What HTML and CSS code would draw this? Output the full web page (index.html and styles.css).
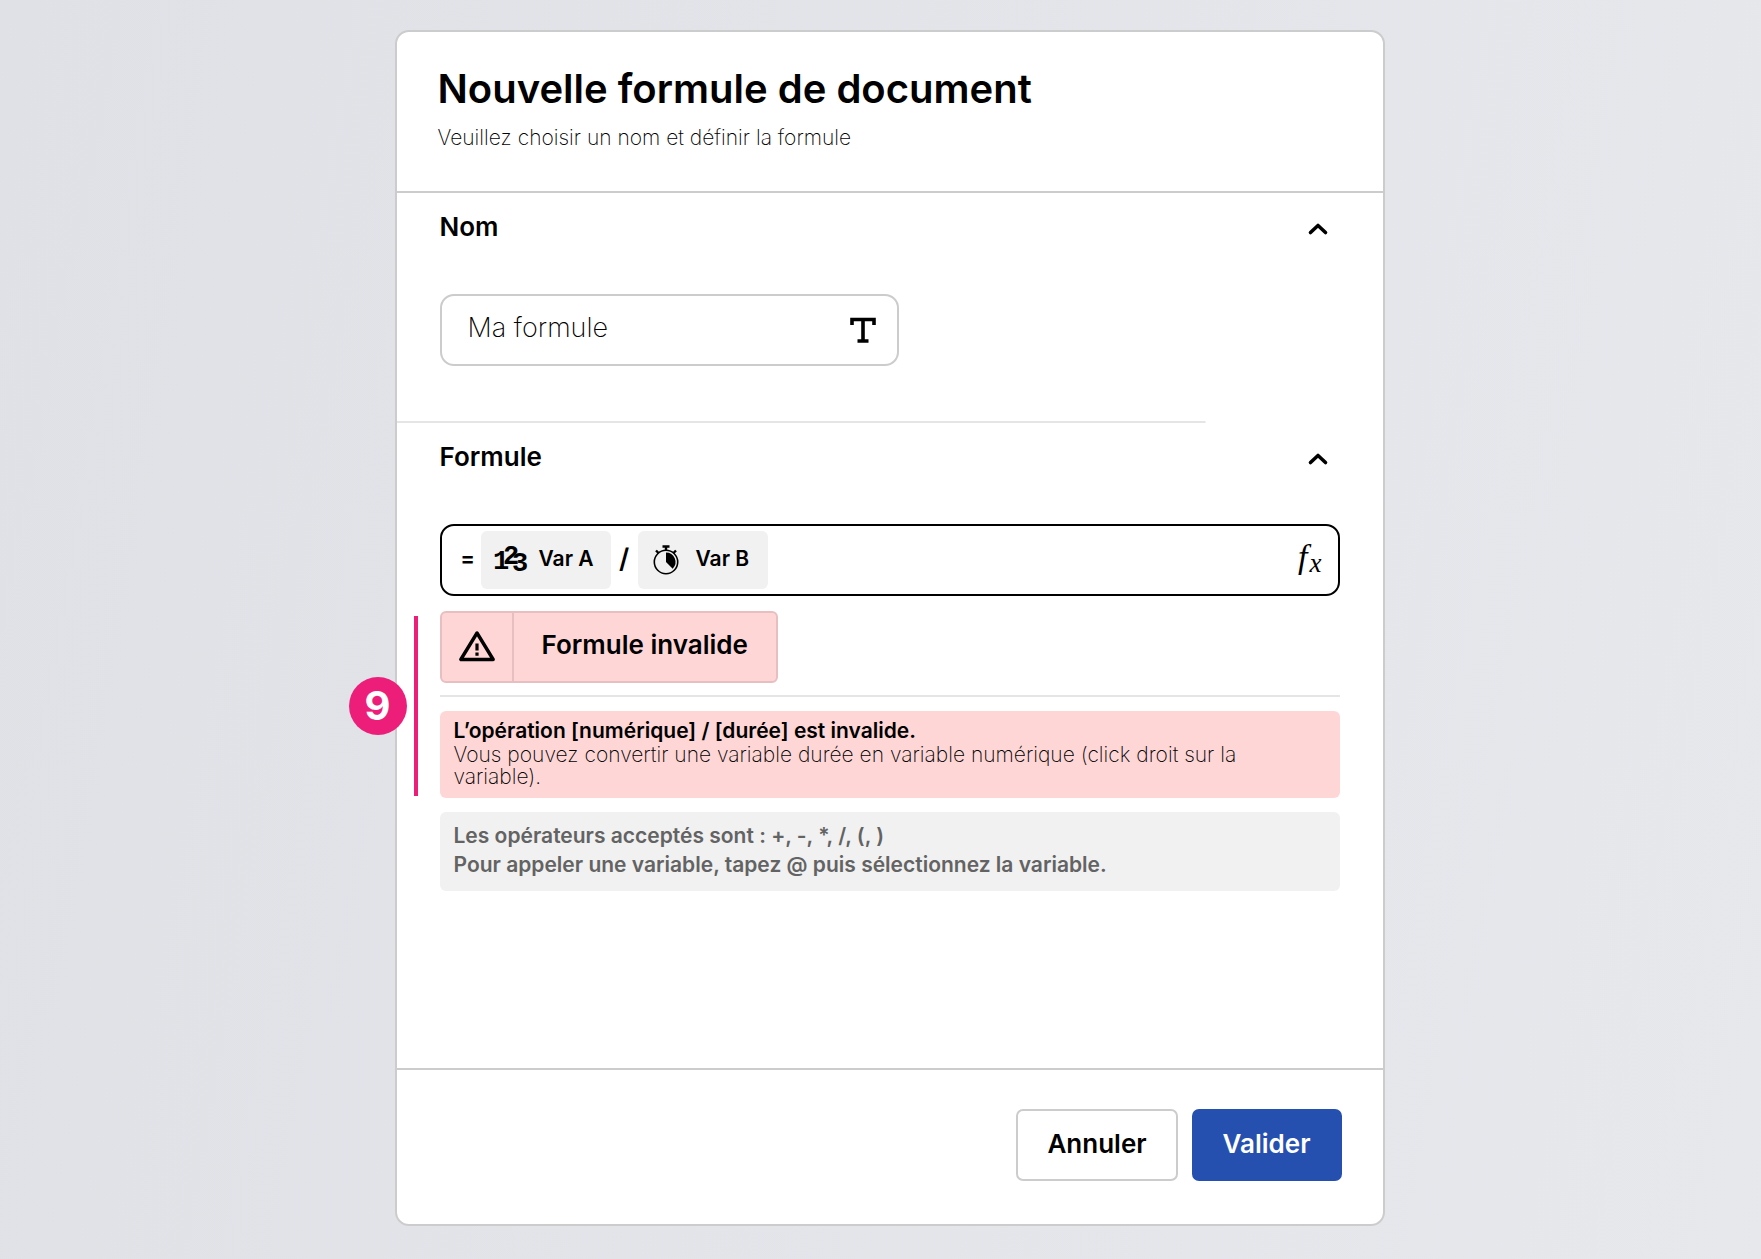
FILE: index.html
```html
<!DOCTYPE html>
<html lang="fr">
<head>
  <meta charset="UTF-8">
  <title>Nouvelle formule de document</title>
  <meta name="viewport" content="width=device-width, initial-scale=1.0">
  <link rel="stylesheet" href="styles.css">
</head>
<body>
  <main class="card">
    <header class="card-header">
      <h1>Nouvelle formule de document</h1>
      <p>Veuillez choisir un nom et définir la formule</p>
    </header>

    <form class="card-form">
      <section class="section section-name">
        <div class="section-head">
          <label class="section-title" for="name">Nom</label>
          <button type="button" class="toggle" aria-label="Replier Nom" aria-expanded="true">
            <svg width="20" height="14" viewBox="0 0 20 14"><path d="M2.500 10.500 10 3.500l7.500 7" fill="none" stroke="#000" stroke-width="3.600" stroke-linecap="round" stroke-linejoin="round"/></svg>
          </button>
        </div>
        <div class="field name-field">
          <input type="text" id="name" value="Ma formule">
          <svg width="26" height="26" viewBox="0 0 26 26"><path d="M2 8V2.500H24V8M13 2.500V24M7.500 24H18.500" fill="none" stroke="#000" stroke-width="3.600"/></svg>
        </div>
      </section>

      <section class="section section-formula">
        <div class="section-head">
          <label class="section-title" for="formula">Formule</label>
          <button type="button" class="toggle" aria-label="Replier Formule" aria-expanded="true">
            <svg width="20" height="14" viewBox="0 0 20 14"><path d="M2.500 10.500 10 3.500l7.500 7" fill="none" stroke="#000" stroke-width="3.600" stroke-linecap="round" stroke-linejoin="round"/></svg>
          </button>
        </div>
        <div class="field formula-field">
          <span class="equal">=</span>
          <button type="button" class="chip">
            <svg class="digits" width="32" height="34" viewBox="0 0 32 34">
              <text x="-2 8 17" y="26 21 28">123</text>
            </svg>
            <span>Var A</span>
          </button>
          <span class="slash">/</span>
          <button type="button" class="chip">
            <svg width="32" height="30" viewBox="0 0 32 30">
              <circle cx="14" cy="17" r="11.700" fill="none" stroke="#000" stroke-width="1.600"/>
              <path d="M14 7.500A9.500 9.500 0 0 1 20.700 23.700L14 17Z"/>
              <path d="M10.500 1.500h7M14 1.500V5M4 5.500l2.500 2.500M24 5.500l-2.500 2.500" fill="none" stroke="#000" stroke-width="2.400"/>
            </svg>
            <span>Var B</span>
          </button>
          <input type="text" id="formula">
          <span class="fx">f<sub>x</sub></span>
        </div>

        <div class="feedback">
          <div class="alert" role="alert">
            <span class="alert-icon">
              <svg width="36" height="32" viewBox="0 0 36 32"><path d="M18 2 1.800 28.500h32.400Z" fill="none" stroke="#000" stroke-width="3.400" stroke-linejoin="round"/><path d="M18 12.500v7M18 21.500v3.200" stroke="#000" stroke-width="3.200"/></svg>
            </span>
            <strong>Formule invalide</strong>
          </div>
          <hr>
          <div class="note note-error">
            <strong>L’opération [numérique] / [durée] est invalide.</strong>
            <p>Vous pouvez convertir une variable durée en variable numérique (click droit sur la variable).</p>
          </div>
          <span class="marker">9</span>
        </div>

        <div class="note note-help">
          <p>Les opérateurs acceptés sont : +, -, *, /, (, )</p>
          <p>Pour appeler une variable, tapez @ puis sélectionnez la variable.</p>
        </div>
      </section>

      <footer class="card-footer">
        <button type="button" class="btn btn-cancel">Annuler</button>
        <button type="submit" class="btn btn-submit">Valider</button>
      </footer>
    </form>
  </main>
</body>
</html>
```

FILE: styles.css
```css
* { box-sizing: border-box; }
body {
  margin: 0;
  padding: 30px 16px 33px 34px;
  min-height: 100vh;
  display: flex;
  justify-content: center;
  font-family: Inter, sans-serif;
  font-size: 21px;
  color: #000;
  background: linear-gradient(100deg, #e0e1e6, #e7e8ec);
}
h1, p { margin: 0; }
button, input { font: inherit; color: inherit; }
button { cursor: pointer; }
svg { display: block; flex: none; overflow: visible; }

.card {
  width: 100%;
  max-width: 990px;
  display: flex;
  flex-direction: column;
  background: #fff;
  border: 2px solid #ccc;
  border-radius: 14px;
}
.card-header {
  padding: 33px 41px 40px;
  border-bottom: 2px solid #ccc;
}
.card-header h1 {
  font-size: 40px; line-height: 48px; font-weight: 600;
}
.card-header p {
  margin-top: 12px;
  line-height: 26px; font-weight: 200;
}
.card-form {
  flex: 1;
  display: flex;
  flex-direction: column;
}

.section { padding: 16px 43px 57px; }
.section-name {
  background: linear-gradient(#e5e5e5, #e5e5e5) left bottom / 82% 2px no-repeat;
}
.section-head {
  display: flex; justify-content: space-between; align-items: center;
  margin-bottom: 49px;
}
.section-title {
  font-size: 26px; line-height: 36px; font-weight: 600;
}
.toggle {
  padding: 4px 12px 0;
  border: none; background: none;
}

.field {
  display: flex; align-items: center;
  height: 72px;
  border: 2px solid #ccc;
  border-radius: 14px;
}
.field input {
  flex: 1; min-width: 0;
  padding: 0;
  border: none; outline: none; background: none;
}
.name-field {
  max-width: 459px;
  padding: 0 21px 0 26px;
}
.name-field input {
  height: 64px;
  padding-bottom: 6px;
  font-size: 27px; font-weight: 200;
}
.formula-field {
  padding: 0 16px 0 19px;
  border-color: #000;
}
.equal {
  width: 20px;
  padding-bottom: 4px;
  font-weight: 700;
}
.slash {
  width: 27px;
  padding-bottom: 4px;
  text-align: center;
  font-size: 27px; font-weight: 600;
}
.chip {
  display: flex; align-items: center; gap: 12px;
  width: 130px; height: 58px;
  padding: 0 14px;
  white-space: nowrap;
  font-weight: 600;
  border: none; border-radius: 6px;
  background: #f1f1f1;
}
.chip span { padding-bottom: 3px; }
.digits {
  font-family: "Liberation Mono", monospace;
  font-size: 27px; font-weight: 700;
}
.fx {
  padding-bottom: 6px;
  font-family: "Liberation Serif", serif;
  font-size: 34px; font-style: italic;
}
.fx sub { margin-left: 2px; font-size: 27px; line-height: 0; vertical-align: -4px; }

.feedback {
  position: relative;
  margin: 15px 0 14px;
}
.alert {
  display: inline-flex; align-items: stretch;
  height: 72px;
  vertical-align: top;
  font-size: 26px;
  background: #ffd6d6;
  border: 2px solid #e8bfc0;
  border-radius: 6px;
}
.alert-icon {
  display: flex; align-items: center;
  padding: 0 17px;
  border-right: 2px solid #e8bfc0;
}
.alert strong {
  padding: 0 28px;
  line-height: 64px; font-weight: 600;
}
.feedback hr {
  margin: 12px 0 14px;
  border: none; border-top: 2px solid #e5e5e5;
}
.note {
  padding: 6px 14px 10px;
  border-radius: 6px;
}
.note-error { background: #ffd6d6; line-height: 22px; }
.note-error strong { display: block; line-height: 27px; font-weight: 600; }
.note-error p { font-weight: 200; }
.note-help {
  padding: 9px 14px 12px;
  line-height: 29px; font-weight: 600;
  color: #636363;
  background: #f1f1f1;
}

/* numbered marker in the margin of the feedback block */
.feedback::before {
  content: "";
  position: absolute;
  top: 5px; bottom: 2px; left: -26px;
  width: 4px;
  background: #ed1e79;
}
.marker {
  position: absolute;
  top: 50%; left: -91px;
  width: 58px; height: 58px;
  margin-top: -28px;
  border-radius: 50%;
  text-align: center;
  font-size: 40px; line-height: 58px; font-weight: 700;
  color: #fff;
  background: #ed1e79;
}

.card-footer {
  display: flex; justify-content: flex-end; gap: 14px;
  margin-top: auto;
  padding: 39px 41px 43px;
  border-top: 2px solid #ccc;
}
.btn {
  height: 72px;
  padding: 0 29px 4px;
  font-size: 26px; font-weight: 600;
  border: 2px solid #ccc;
  border-radius: 7px;
  background: #fff;
}
.btn-submit {
  color: #fff;
  border-color: #2550b0;
  background: #2550b0;
}

@media (max-width: 700px) {
  .card-header, .section { padding-left: 32px; padding-right: 20px; }
  .formula-field { height: auto; min-height: 72px; flex-wrap: wrap; }
}
```
